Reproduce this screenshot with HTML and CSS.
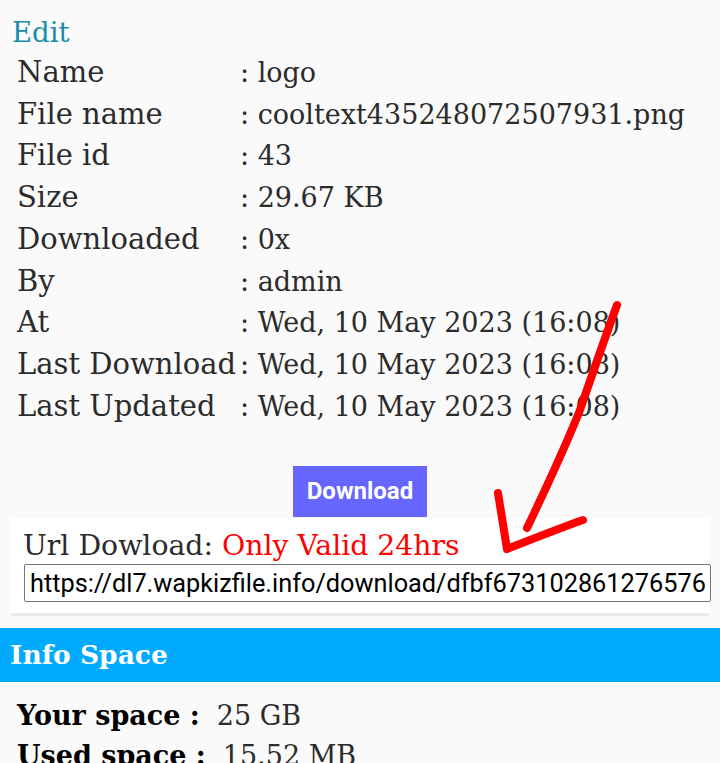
FILE: index.html
```html
<!DOCTYPE html>
<html>
<head>
<meta charset="utf-8">
<link rel="stylesheet" href="styles.css">
</head>
<body>
<div class="page">
  <a class="edit" href="#">Edit</a>
  <div class="details">
    <div class="lbl">Name</div><div class="val">: logo</div>
    <div class="lbl">File name</div><div class="val">: cooltext435248072507931.png</div>
    <div class="lbl">File id</div><div class="val">: 43</div>
    <div class="lbl">Size</div><div class="val">: 29.67 KB</div>
    <div class="lbl">Downloaded</div><div class="val">: 0x</div>
    <div class="lbl">By</div><div class="val">: admin</div>
    <div class="lbl">At</div><div class="val">: Wed, 10 May 2023 (16:08)</div>
    <div class="lbl">Last Download</div><div class="val">: Wed, 10 May 2023 (16:08)</div>
    <div class="lbl">Last Updated</div><div class="val">: Wed, 10 May 2023 (16:08)</div>
  </div>
  <div class="dl-wrap"><a class="dl-btn" href="#">Download</a></div>
  <div class="url-box">
    <div class="url-title">Url Dowload: <span class="warn">Only Valid 24hrs</span></div>
    <input class="url-input" type="text" value="https://dl7.wapkizfile.info/download/dfbf673102861276576">
  </div>
  <div class="bar">Info Space</div>
  <div class="space">
    <div class="srow"><b>Your space :</b><span>25 GB</span></div>
    <div class="srow"><b>Used space :</b><span>15.52 MB</span></div>
  </div>
  <svg class="arrow" width="720" height="763" viewBox="0 0 720 763">
    <path d="M617 305 C606 335 592 375 580 410 C568 440 550 480 527 528" fill="none" stroke="#ff0000" stroke-width="8" stroke-linecap="round"/>
    <path d="M498 493 C501 512 504 530 507 549 C530 540 560 528 583 520" fill="none" stroke="#ff0000" stroke-width="8" stroke-linecap="round" stroke-linejoin="round"/>
  </svg>
</div>
</body>
</html>
```

FILE: styles.css
```css
html, body {
  margin: 0;
  padding: 0;
  background: #fafafa;
}
.page {
  position: relative;
  width: 720px;
  height: 763px;
  overflow: hidden;
  font-family: "DejaVu Serif", serif;
  color: #2b2b2b;
}
.edit {
  display: block;
  margin: 12px 0 0 12px;
  font-size: 27.5px;
  line-height: 40px;
  color: #1a8cab;
  text-decoration: none;
}
.details {
  display: grid;
  grid-template-columns: 223px auto;
  margin-left: 17px;
  line-height: 41.7px;
}
.lbl {
  font-size: 29px;
}
.val {
  font-size: 27px;
}
.dl-wrap {
  display: flex;
  justify-content: center;
  margin-top: 39px;
}
.dl-btn {
  display: block;
  width: 134px;
  height: 51px;
  line-height: 51px;
  text-align: center;
  background: #6666ff;
  color: #fff;
  font-family: Roboto, sans-serif;
  font-weight: bold;
  font-size: 24px;
  text-decoration: none;
}
.url-box {
  margin: 1px 11px 0 11px;
  background: #fff;
  padding: 11px 0 11px 12px;
  border-bottom: 3px solid #ebebeb;
}
.url-title {
  font-size: 28.3px;
  line-height: 34px;
}
.warn {
  color: #ff0000;
}
.url-input {
  display: block;
  box-sizing: border-box;
  width: 687px;
  height: 38px;
  margin: 1px 0 0 1px;
  padding: 0 5px;
  border: 1px solid #767676;
  border-radius: 2px;
  font-family: Roboto, sans-serif;
  font-size: 25.3px;
  color: #000;
  background: #fff;
}
.bar {
  margin-top: 12px;
  height: 54px;
  line-height: 54px;
  background: #00aaff;
  color: #fff;
  font-weight: bold;
  font-size: 26.5px;
  padding-left: 10px;
}
.space {
  padding: 14px 0 0 17px;
  font-size: 27px;
  line-height: 40px;
}
.srow b {
  color: #000;
  margin-right: 17px;
}
.arrow {
  position: absolute;
  left: 0;
  top: 0;
  pointer-events: none;
}
```
